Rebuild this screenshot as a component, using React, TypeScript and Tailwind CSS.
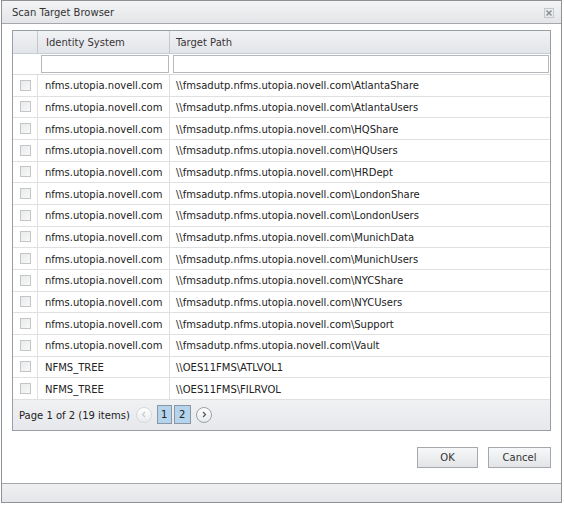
import React from "react";

const rows = [
  ["nfms.utopia.novell.com", "\\\\fmsadutp.nfms.utopia.novell.com\\AtlantaShare"],
  ["nfms.utopia.novell.com", "\\\\fmsadutp.nfms.utopia.novell.com\\AtlantaUsers"],
  ["nfms.utopia.novell.com", "\\\\fmsadutp.nfms.utopia.novell.com\\HQShare"],
  ["nfms.utopia.novell.com", "\\\\fmsadutp.nfms.utopia.novell.com\\HQUsers"],
  ["nfms.utopia.novell.com", "\\\\fmsadutp.nfms.utopia.novell.com\\HRDept"],
  ["nfms.utopia.novell.com", "\\\\fmsadutp.nfms.utopia.novell.com\\LondonShare"],
  ["nfms.utopia.novell.com", "\\\\fmsadutp.nfms.utopia.novell.com\\LondonUsers"],
  ["nfms.utopia.novell.com", "\\\\fmsadutp.nfms.utopia.novell.com\\MunichData"],
  ["nfms.utopia.novell.com", "\\\\fmsadutp.nfms.utopia.novell.com\\MunichUsers"],
  ["nfms.utopia.novell.com", "\\\\fmsadutp.nfms.utopia.novell.com\\NYCShare"],
  ["nfms.utopia.novell.com", "\\\\fmsadutp.nfms.utopia.novell.com\\NYCUsers"],
  ["nfms.utopia.novell.com", "\\\\fmsadutp.nfms.utopia.novell.com\\Support"],
  ["nfms.utopia.novell.com", "\\\\fmsadutp.nfms.utopia.novell.com\\Vault"],
  ["NFMS_TREE", "\\\\OES11FMS\\ATLVOL1"],
  ["NFMS_TREE", "\\\\OES11FMS\\FILRVOL"],
];

function CloseIcon() {
  return (
    <svg width="10" height="10" viewBox="0 0 10 10">
      <rect x="0.5" y="0.5" width="9" height="9" fill="none" stroke="#c4c8cc" />
      <path d="M2.5 2.5 L7.5 7.5 M7.5 2.5 L2.5 7.5" stroke="#8d9297" strokeWidth="1.6" />
    </svg>
  );
}

function Checkbox() {
  return (
    <div className="w-[11px] h-[11px] border border-[#c3c6c9] bg-gradient-to-br from-[#e9eaeb] to-[#f8f8f8]" />
  );
}

function Arrow({ dir, disabled }: { dir: "l" | "r"; disabled?: boolean }) {
  return (
    <div
      className={`w-[16px] h-[16px] rounded-full border flex items-center justify-center bg-gradient-to-b from-white to-[#e8eaec] ${
        disabled ? "border-[#d6d9dc]" : "border-[#9aa1a8]"
      }`}
    >
      <svg width="6" height="7" viewBox="0 0 6 7">
        <path
          d={dir === "l" ? "M4 1 L1.5 3.5 L4 6" : "M2 1 L4.5 3.5 L2 6"}
          fill="none"
          stroke={disabled ? "#c8ccd0" : "#555b61"}
          strokeWidth="1.3"
        />
      </svg>
    </div>
  );
}

export default function App() {
  return (
    <div
      className="w-[564px] h-[505px] bg-white text-[10px] text-[#222]"
      style={{ fontFamily: '"DejaVu Sans", Verdana, sans-serif' }}
    >
      <div className="ml-[1px] w-[561px] h-[503px] border border-[#8e9196] flex flex-col bg-white">
        {/* Title bar */}
        <div className="h-[23px] border-b border-[#a4a8ad] bg-gradient-to-b from-[#f3f4f5] to-[#e3e5e8] flex items-center justify-between pl-[10px] pr-[7px] pt-[1px] shrink-0">
          <span className="text-[#333]">Scan Target Browser</span>
          <CloseIcon />
        </div>

        {/* Grid */}
        <div className="px-[10px] pt-[6px]">
          <div className="border border-[#999ea4] flex flex-col">
            {/* header */}
            <div className="h-[23px] flex border-b border-[#c9ccd0] bg-gradient-to-b from-[#f1f2f4] to-[#e2e5e9] text-[#3a3336]">
              <div className="w-[25px] border-r border-[#c4c8cc]" />
              <div className="w-[132px] border-r border-[#c4c8cc] flex items-center pl-[8px] pt-[1px]">Identity System</div>
              <div className="flex-1 flex items-center pl-[6px] pt-[1px]">Target Path</div>
            </div>
            {/* filter */}
            <div className="h-[21px] flex border-b border-[#dcdcdc]">
              <div className="w-[25px]" />
              <div className="w-[132px] pl-[3px] pr-[1px] pt-[1px]">
                <div className="h-[18px] border border-[#b5b9bd] bg-white" />
              </div>
              <div className="flex-1 pl-[3px] pr-[1px] pt-[1px]">
                <div className="h-[18px] border border-[#b5b9bd] bg-white" />
              </div>
            </div>
            {/* rows */}
            {rows.map(([id, path], i) => (
              <div key={i} className="h-[21.67px] flex border-b border-[#e0e0e0]">
                <div className="w-[25px] border-r border-[#e0e0e0] flex items-center pl-[7px]">
                  <Checkbox />
                </div>
                <div className="w-[132px] border-r border-[#e0e0e0] flex items-center pl-[7px] pt-[1px] whitespace-nowrap">{id}</div>
                <div className="flex-1 flex items-center pl-[6px] pt-[1px] whitespace-nowrap">{path}</div>
              </div>
            ))}
            {/* pager */}
            <div className="h-[30px] flex items-center bg-gradient-to-b from-[#f0f1f3] to-[#e6e8eb] pl-[6px] gap-[5px]">
              <span className="mr-[1px] pt-[1px]">Page 1 of 2 (19 items)</span>
              <Arrow dir="l" disabled />
              <div className="flex gap-[2px]">
                <div className="w-[15px] h-[19px] border border-[#8a97a3] bg-[#b3d4ec] flex items-center justify-center">1</div>
                <div className="w-[17px] h-[19px] border border-[#8a97a3] bg-[#b3d4ec] flex items-center justify-center">2</div>
              </div>
              <Arrow dir="r" />
            </div>
          </div>
        </div>

        {/* Buttons */}
        <div className="flex justify-end gap-[10px] pr-[10px] pt-[16px]">
          <button className="w-[61px] h-[21px] border border-[#a5a9ad] bg-gradient-to-b from-[#f7f8f9] to-[#e2e4e7] text-[#333]">OK</button>
          <button className="w-[63px] h-[21px] border border-[#a5a9ad] bg-gradient-to-b from-[#f7f8f9] to-[#e2e4e7] text-[#333]">Cancel</button>
        </div>

        <div className="flex-1" />
        {/* Footer */}
        <div className="h-[19px] border-t border-[#a4a8ad] bg-gradient-to-b from-[#eff0f2] to-[#e4e6e9] shrink-0" />
      </div>
    </div>
  );
}
